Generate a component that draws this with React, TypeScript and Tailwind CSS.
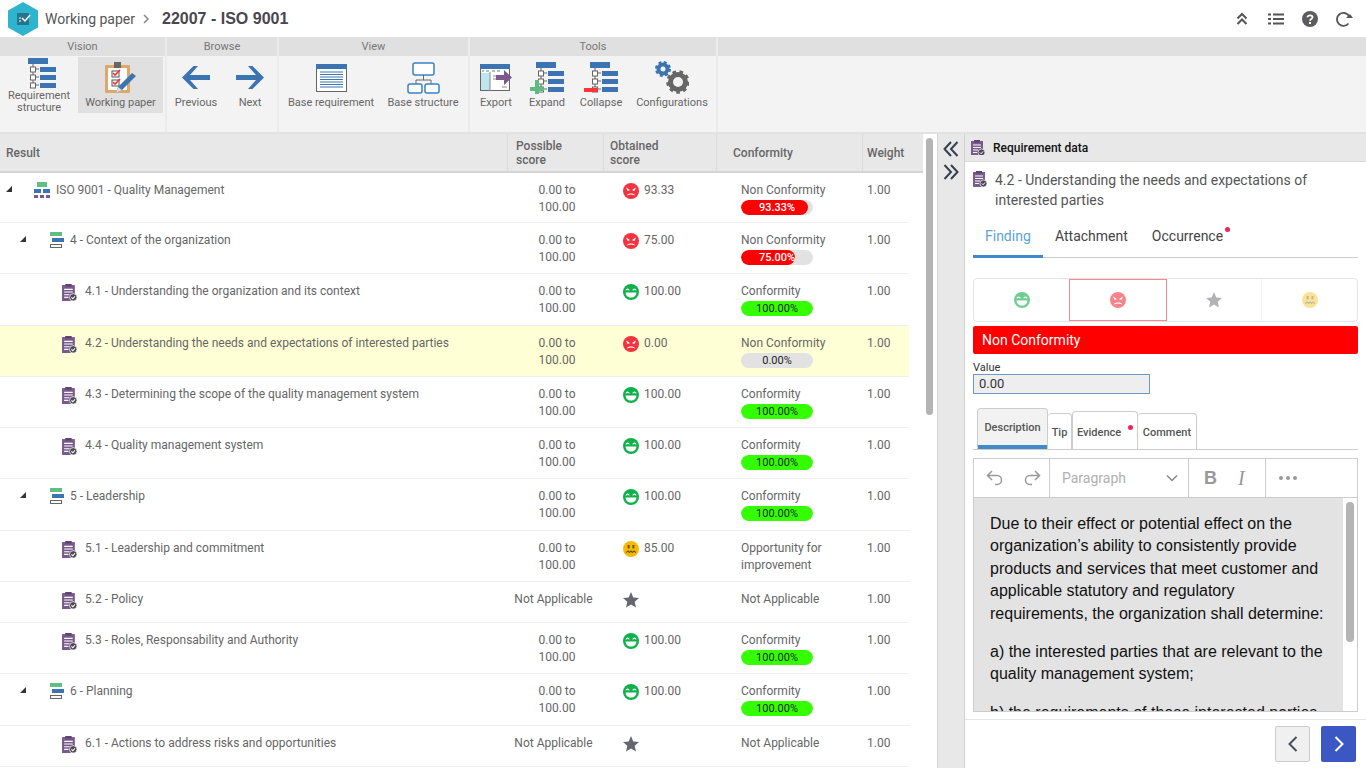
import { ReactNode } from "react";

type Mood = "bad" | "good" | "meh" | "star";

type Row = {
  level: 0 | 1 | 2;
  title?: string;
  h: number;
  na?: boolean;
  mood: Mood;
  score?: string;
  label?: string;
  pct?: number;
  selected?: boolean;
};

const rows: Row[] = [
  { level: 0, title: "ISO 9001 - Quality Management", h: 49, mood: "bad", score: "93.33", label: "Non Conformity", pct: 93.33 },
  { level: 1, title: "4 - Context of the organization", h: 50, mood: "bad", score: "75.00", label: "Non Conformity", pct: 75 },
  { level: 2, title: "4.1 - Understanding the organization and its context", h: 51, mood: "good", score: "100.00", label: "Conformity", pct: 100 },
  { level: 2, title: "4.2 - Understanding the needs and expectations of interested parties", h: 50, mood: "bad", score: "0.00", label: "Non Conformity", pct: 0, selected: true },
  { level: 2, title: "4.3 - Determining the scope of the quality management system", h: 50, mood: "good", score: "100.00", label: "Conformity", pct: 100 },
  { level: 2, title: "4.4 - Quality management system", h: 50, mood: "good", score: "100.00", label: "Conformity", pct: 100 },
  { level: 1, title: "5 - Leadership", h: 51, mood: "good", score: "100.00", label: "Conformity", pct: 100 },
  { level: 2, title: "5.1 - Leadership and commitment", h: 50, mood: "meh", score: "85.00", label: "Opportunity for improvement" },
  { level: 2, title: "5.2 - Policy", h: 40, na: true, mood: "star", label: "Not Applicable" },
  { level: 2, title: "5.3 - Roles, Responsability and Authority", h: 50, mood: "good", score: "100.00", label: "Conformity", pct: 100 },
  { level: 1, title: "6 - Planning", h: 51, mood: "good", score: "100.00", label: "Conformity", pct: 100 },
  { level: 2, title: "6.1 - Actions to address risks and opportunities", h: 40, na: true, mood: "star", label: "Not Applicable" },
  { level: 2, h: 50, mood: "good" },
];

function Face({ mood, size = 16 }: { mood: Mood; size?: number }) {
  if (mood === "star") {
    return (
      <svg width={size} height={size} viewBox="0 0 16 16">
        <polygon points="8,0 10.3,5.4 16,6 11.7,9.8 13,15.6 8,12.6 3,15.6 4.3,9.8 0,6 5.7,5.4" fill="#666670" />
      </svg>
    );
  }
  if (mood === "good") {
    return (
      <svg width={size} height={size} viewBox="0 0 16 16">
        <circle cx="8" cy="8" r="8" fill="#10b04a" />
        <path d="M3 6.4c.6-1.7 2.6-1.7 3.2 0M9.8 6.4c.6-1.7 2.6-1.7 3.2 0" fill="none" stroke="#fff" strokeWidth="1.3" />
        <path d="M2.6 8.4h10.8c0 3-2.4 5-5.4 5s-5.4-2-5.4-5z" fill="#fff" />
      </svg>
    );
  }
  if (mood === "meh") {
    return (
      <svg width={size} height={size} viewBox="0 0 16 16">
        <circle cx="8" cy="8" r="8" fill="#f7b900" />
        <rect x="4.6" y="4" width="2" height="3.4" fill="#6b5200" />
        <rect x="9.4" y="4" width="2" height="3.4" fill="#6b5200" />
        <path d="M3 11.6l2-1.6 1.5 1.4L8 10l1.5 1.4L11 10l2 1.6" fill="none" stroke="#6b5200" strokeWidth="1.1" />
      </svg>
    );
  }
  return (
    <svg width={size} height={size} viewBox="0 0 16 16">
      <circle cx="8" cy="8" r="8" fill="#f5333f" />
      <path d="M3 4.6l3.4 1.8v1.4H4.4zM13 4.6L9.6 6.4v1.4h2z" fill="#fff" />
      <path d="M3.8 12.4C5 9.8 11 9.8 12.2 12.4L10.6 12c-1.4-.8-3.8-.8-5.2 0z" fill="#fff" />
    </svg>
  );
}

function ReqIcon({ size = 15 }: { size?: number }) {
  return (
    <svg width={size} height={size * 1.14} viewBox="0 0 14 16">
      <rect x="0" y="1" width="12" height="15" fill="#7a5a8c" />
      <rect x="3" y="0" width="6" height="2.4" fill="#5f4470" />
      <path d="M2 5h8M2 7.5h8M2 10h5M2 12.500h4" stroke="#fff" strokeWidth="1" />
      <circle cx="10.500" cy="12.500" r="3.500" fill="#4a4a4f" stroke="#fff" strokeWidth=".7" />
      <path d="M8.800 12.500l1.300 1.300 2-2.300" fill="none" stroke="#fff" strokeWidth="1" />
    </svg>
  );
}

function LevelIcon({ level }: { level: 0 | 1 }) {
  if (level === 0) {
    return (
      <svg width="16" height="16" viewBox="0 0 16 16">
        <rect x="3" y="0" width="10" height="5" fill="#62bf82" />
        <rect x="0" y="7" width="7" height="4" fill="#3b74b0" />
        <rect x="9" y="7" width="7" height="4" fill="#3b74b0" />
        <rect x="0" y="13" width="4" height="3" fill="#7a5a8c" />
        <rect x="6" y="13" width="4" height="3" fill="#7a5a8c" />
        <rect x="12" y="13" width="4" height="3" fill="#7a5a8c" />
      </svg>
    );
  }
  return (
    <svg width="14" height="16" viewBox="0 0 14 16">
      <rect x="0" y="0" width="12" height="4" fill="#62bf82" />
      <rect x="2" y="6" width="12" height="4" fill="#3b74b0" />
      <rect x=".5" y="12.500" width="11" height="3" fill="none" stroke="#666" />
    </svg>
  );
}

function Expander() {
  return (
    <svg width="6" height="6" viewBox="0 0 6 6" className="shrink-0">
      <polygon points="6,0 6,6 0,6" fill="#333" />
    </svg>
  );
}

function ScoreBar({ pct }: { pct: number }) {
  const full = pct === 100;
  const color = pct === 100 ? "bg-[#33ff00]" : "bg-[#ff0000]";
  return (
    <div className="relative mt-[1px] h-[15px] w-[72px] overflow-hidden rounded-full bg-[#e2e2e2]">
      <div className={`h-full rounded-full ${color}`} style={{ width: `${pct}%` }} />
      <div className={`absolute inset-0 text-center text-[11px] leading-[15px] ${full || pct === 0 ? "text-[#222]" : "font-medium text-white"}`}>
        {pct.toFixed(2)}%
      </div>
    </div>
  );
}

function TableRow({ row }: { row: Row }) {
  const indent = row.level === 0 ? "pl-[6px]" : row.level === 1 ? "pl-[20px]" : "pl-[62px]";
  return (
    <div
      className={`flex border-b border-[#eeeeee] pt-[9px] text-xs leading-[17px] text-[#666] ${row.selected ? "bg-[#ffffd6]" : "bg-white"}`}
      style={{ height: row.h + 1 }}
    >
      <div className={`flex w-[507px] items-start ${indent}`}>
        {row.level < 2 && (
          <div className="mt-[4px]">
            <Expander />
          </div>
        )}
        {row.level === 0 && (
          <div className="ml-[22px] mr-[6px]">
            <LevelIcon level={0} />
          </div>
        )}
        {row.level === 1 && (
          <div className="ml-[24px] mr-[6px]">
            <LevelIcon level={1} />
          </div>
        )}
        {row.level === 2 && (
          <div className="mr-[8px] mt-[1px]">
            <ReqIcon />
          </div>
        )}
        {row.title && <span>{row.title}</span>}
      </div>
      <div className="w-[96px] text-center">
        {row.na ? (
          <div className="pr-[3px]">Not Applicable</div>
        ) : row.title ? (
          <div className="pl-[4px]">
            0.00 to
            <br />
            100.00
          </div>
        ) : null}
      </div>
      <div className="flex w-[113px] items-start gap-[5px] pl-[20px]">
        <div className="mt-[1px]">
          <Face mood={row.mood} />
        </div>
        {row.score && <span>{row.score}</span>}
      </div>
      <div className="w-[146px] pl-[25px]">
        {row.label && <div className="w-[100px]">{row.label}</div>}
        {row.pct !== undefined && <ScoreBar pct={row.pct} />}
      </div>
      <div className="w-[47px] pl-[5px]">{row.title ? "1.00" : ""}</div>
    </div>
  );
}

function StructureIcon({ mark }: { mark?: "plus" | "minus" }) {
  return (
    <svg width="34" height="32" viewBox="0 0 34 32">
      <rect x="6" y="0" width="20" height="6" fill="#3b74b0" />
      <path d="M11 6v22M11 11h6M11 19h6M11 27h6" stroke="#666" fill="none" />
      <rect x="8.500" y="9" width="5" height="5" fill="#fff" stroke="#666" />
      <rect x="8.500" y="17" width="5" height="5" fill="#fff" stroke="#666" />
      <rect x="8.500" y="25" width="5" height="5" fill="#fff" stroke="#666" />
      <rect x="18" y="9" width="16" height="5" fill="#3b74b0" />
      <rect x="18" y="17" width="16" height="5" fill="#3b74b0" />
      <rect x="18" y="25" width="16" height="5" fill="#3b74b0" />
      {mark === "plus" && <path d="M0 25h14v4H0zM5 18h4v14H5z" fill="#5cbb7f" />}
      {mark === "minus" && <rect x="0" y="26" width="14" height="4" fill="#f33" />}
    </svg>
  );
}

function WorkingPaperIcon() {
  return (
    <svg width="32" height="32" viewBox="0 0 32 32">
      <rect x="0" y="3" width="25" height="28" rx="1" fill="#e0a868" />
      <rect x="3" y="6" width="19" height="22" fill="#fff" />
      <rect x="9" y="0" width="7" height="6" fill="#666" />
      <rect x="7" y="9" width="7" height="6" fill="#fff" stroke="#555" />
      <rect x="7" y="18" width="7" height="6" fill="#fff" stroke="#555" />
      <path d="M8 11l2 2 5-5M8 20l2 2 5-5" fill="none" stroke="#e33" strokeWidth="1.600" />
      <path d="M11 31l2-6L27 11l4 3-14 14z" fill="#3b74b0" />
      <path d="M11 31l2-6 4 3z" fill="#ddd" />
    </svg>
  );
}

function ArrowIcon({ flip }: { flip?: boolean }) {
  return (
    <svg width="28" height="23" viewBox="0 0 28 23" className={flip ? "-scale-x-100" : ""}>
      <path d="M11.500 0L0 11.500 11.500 23h4.500L8 14h20V9H8l8-9z" fill="#3b74b0" />
    </svg>
  );
}

function BaseReqIcon() {
  return (
    <svg width="31" height="28" viewBox="0 0 31 28">
      <rect x=".5" y=".5" width="30" height="27" fill="#fff" stroke="#666" />
      <rect x="0" y="0" width="31" height="5" fill="#3b74b0" />
      <path d="M4 8h23M4 10.500h23M4 13h23M4 15.500h23M4 18h23M4 20.500h23M4 23h23" stroke="#3b74b0" />
    </svg>
  );
}

function BaseStructIcon() {
  return (
    <svg width="33" height="32" viewBox="0 0 33 32">
      <rect x="6" y="1" width="21" height="12" rx="2" fill="#fff" stroke="#3b82c4" strokeWidth="1.500" />
      <path d="M16.500 13v5M9 22v-4h15v4" fill="none" stroke="#666" />
      <rect x="1" y="22" width="14" height="9" rx="2" fill="#fff" stroke="#3b82c4" strokeWidth="1.500" />
      <rect x="18" y="22" width="14" height="9" rx="2" fill="#fff" stroke="#3b82c4" strokeWidth="1.500" />
    </svg>
  );
}

function ExportIcon() {
  return (
    <svg width="32" height="28" viewBox="0 0 32 28">
      <rect x=".5" y=".5" width="29" height="26" fill="#fff" stroke="#666" />
      <rect x="0" y="0" width="30" height="5" fill="#3b74b0" />
      <rect x="1" y="9" width="9" height="17" fill="#bfe6ee" />
      <path d="M2 7h2M6 7h3M12 7h3M17 7h3" stroke="#777" />
      <path d="M10 8v19M13 12h6M13 15h5M22 23h5" stroke="#888" />
      <path d="M16 11h8V6l8 7.500L24 21v-5h-8z" fill="#7d5a8e" />
    </svg>
  );
}

function GearIcon() {
  return (
    <svg width="34" height="33" viewBox="0 0 34 33">
      <circle cx="23" cy="21" r="7.500" fill="none" stroke="#666" strokeWidth="5" />
      <circle cx="23" cy="21" r="10" fill="none" stroke="#666" strokeWidth="3.500" strokeDasharray="3.500 3.400" />
      <circle cx="8" cy="8" r="4.500" fill="none" stroke="#3b74b0" strokeWidth="4" />
      <circle cx="8" cy="8" r="6.500" fill="none" stroke="#3b74b0" strokeWidth="3" strokeDasharray="2.800 2.300" />
    </svg>
  );
}

function RibbonButton({ label, width, active, children }: { label: string; width: string; active?: boolean; children: ReactNode }) {
  return (
    <div className={`flex h-[56px] shrink-0 flex-col items-center ${width} ${active ? "bg-[#e0e0e0]" : ""}`}>
      <div className="flex h-[40px] w-full items-center justify-center pt-[1px]">{children}</div>
      <div className="text-center text-[11px] leading-[12px] text-[#666]">{label}</div>
    </div>
  );
}

function RibbonGroup({ title, width, children }: { title: string; width: string; children?: ReactNode }) {
  return (
    <div className={`flex flex-col ${width}`}>
      <div className="h-[19px] bg-[#e0e0e0] text-center text-[11px] leading-[19px] text-[#777]">{title}</div>
      <div className="flex flex-1 pt-[1px]">{children}</div>
    </div>
  );
}

function Divider() {
  return <div className="w-[2px] shrink-0 bg-[#ebebeb]" />;
}

export default function App() {
  return (
    <div className="flex h-[768px] w-[1366px] flex-col overflow-hidden bg-white font-['Roboto',sans-serif]">
      {/* top bar */}
      <div className="flex h-[37px] shrink-0 items-center pl-[8px] pr-[13px]">
        <svg width="30" height="34" viewBox="0 0 30 34">
          <polygon points="15,0 30,8.500 30,25.500 15,34 0,25.500 0,8.500" fill="#2fb4d0" />
          <rect x="9" y="11" width="12" height="12" fill="#25758f" />
          <path d="M11 16h2M11 19h2" stroke="#fff" />
          <path d="M14 16l3 3 5-6" fill="none" stroke="#fff" strokeWidth="1.500" />
        </svg>
        <span className="ml-[7px] text-sm text-[#555]">Working paper</span>
        <svg width="7" height="10" viewBox="0 0 7 10" className="ml-[8px]">
          <path d="M1 1l4 4-4 4" fill="none" stroke="#888" strokeWidth="1.500" />
        </svg>
        <span className="ml-[12px] font-['Liberation_Sans',sans-serif] text-base font-bold text-[#4a4650]">22007 - ISO 9001</span>
        <div className="ml-auto flex items-center">
          <svg width="14" height="14" viewBox="0 0 14 14">
            <path d="M2.500 6.500L7 2l4.500 4.500M2.500 12L7 7.500l4.500 4.500" fill="none" stroke="#555" strokeWidth="2" />
          </svg>
          <svg width="16" height="12" viewBox="0 0 16 12" className="ml-[19px]">
            <path d="M0 1.500h3M5 1.500h11M0 6h3M5 6h11M0 10.500h3M5 10.500h11" stroke="#555" strokeWidth="2" />
          </svg>
          <svg width="16" height="16" viewBox="0 0 16 16" className="ml-[18px]">
            <circle cx="8" cy="8" r="8" fill="#5c5c60" />
            <path d="M5.500 6.200C5.700 3.700 10.500 3.700 10.500 6.200c0 1.800-2.500 1.700-2.500 3.600" fill="none" stroke="#fff" strokeWidth="1.800" />
            <rect x="7" y="11" width="2" height="2" fill="#fff" />
          </svg>
          <svg width="18" height="16" viewBox="0 0 18 16" className="ml-[17px]">
            <path d="M13.500 12.500A6.500 6.500 0 1 1 14 5" fill="none" stroke="#555" strokeWidth="1.800" />
            <polygon points="11,7 18,7 15,3" fill="#555" />
          </svg>
        </div>
      </div>

      {/* ribbon */}
      <div className="flex h-[97px] shrink-0 border-b-2 border-[#e2e2e2] bg-[#f3f3f3]">
        <RibbonGroup title="Vision" width="w-[165px]">
          <RibbonButton label="Requirement structure" width="w-[78px]">
            <StructureIcon />
          </RibbonButton>
          <RibbonButton label="Working paper" width="w-[85px]" active>
            <WorkingPaperIcon />
          </RibbonButton>
        </RibbonGroup>
        <Divider />
        <RibbonGroup title="Browse" width="w-[110px]">
          <RibbonButton label="Previous" width="w-[58px]">
            <ArrowIcon />
          </RibbonButton>
          <RibbonButton label="Next" width="w-[50px]">
            <ArrowIcon flip />
          </RibbonButton>
        </RibbonGroup>
        <Divider />
        <RibbonGroup title="View" width="w-[189px]">
          <RibbonButton label="Base requirement" width="w-[104px]">
            <BaseReqIcon />
          </RibbonButton>
          <RibbonButton label="Base structure" width="w-[80px]">
            <BaseStructIcon />
          </RibbonButton>
        </RibbonGroup>
        <Divider />
        <RibbonGroup title="Tools" width="w-[246px]">
          <RibbonButton label="Export" width="w-[52px]">
            <ExportIcon />
          </RibbonButton>
          <RibbonButton label="Expand" width="w-[50px]">
            <StructureIcon mark="plus" />
          </RibbonButton>
          <RibbonButton label="Collapse" width="w-[58px]">
            <StructureIcon mark="minus" />
          </RibbonButton>
          <RibbonButton label="Configurations" width="w-[84px]">
            <GearIcon />
          </RibbonButton>
        </RibbonGroup>
        <Divider />
        <RibbonGroup title="" width="flex-1" />
      </div>

      {/* main */}
      <div className="flex min-h-0 flex-1">
        <div className="w-[923px] shrink-0 overflow-hidden">
          <div className="flex h-[39px] border-b-2 border-[#d4d4d4] bg-[#e8e8e8] text-xs font-medium leading-[14px] text-[#666]">
            <div className="flex w-[507px] items-center pl-[6px]">Result</div>
            <div className="flex w-[96px] items-center border-l border-[#dcdcdc] pl-[8px]">
              Possible
              <br />
              score
            </div>
            <div className="flex w-[113px] items-center border-l border-[#dcdcdc] pl-[6px]">
              Obtained
              <br />
              score
            </div>
            <div className="flex w-[146px] items-center border-l border-[#dcdcdc] pl-[16px]">Conformity</div>
            <div className="flex flex-1 items-center border-l border-[#dcdcdc] pl-[4px]">Weight</div>
          </div>
          <div className="w-[909px]">
            {rows.map((row, i) => (
              <TableRow key={i} row={row} />
            ))}
          </div>
        </div>

        <div className="w-[14px] shrink-0 pl-[3px] pt-[4px]">
          <div className="h-[277px] w-[7px] rounded-full bg-[#b4b4b4]" />
        </div>

        <div className="flex w-[28px] shrink-0 flex-col items-center gap-[7px] border-x border-[#d2d2d2] bg-[#e8e8e8] pt-[7px]">
          <svg width="16" height="16" viewBox="0 0 16 16">
            <path d="M8 1L1.500 8 8 15M14.500 1L8 8l6.500 7" fill="none" stroke="#33414f" strokeWidth="2" />
          </svg>
          <svg width="16" height="16" viewBox="0 0 16 16">
            <path d="M1.500 1L8 8l-6.500 7M8 1l6.500 7L8 15" fill="none" stroke="#33414f" strokeWidth="2" />
          </svg>
        </div>

        {/* right panel */}
        <div className="flex min-w-0 flex-1 flex-col">
          <div className="flex h-[28px] shrink-0 items-center gap-[8px] border-b border-[#d8d8d8] bg-[#e8e8e8] pl-[6px] text-xs font-medium text-[#111]">
            <ReqIcon size={14} />
            Requirement data
          </div>
          <div className="min-h-0 flex-1 px-[8px]">
            <div className="flex gap-[8px] pt-[8px] text-sm leading-[20px] text-[#555]">
              <div className="mt-[1px]">
                <ReqIcon size={14} />
              </div>
              <div className="w-[340px]">4.2 - Understanding the needs and expectations of interested parties</div>
            </div>
            <div className="mt-[10px] flex h-[38px] border-b border-[#cccccc] text-sm leading-[20px] text-[#444]">
              <div className="h-[38px] w-[70px] border-b-[3px] border-[#428bca] pl-[12px] pt-[6px] text-[#5ba3d9]">Finding</div>
              <div className="ml-[12px] pt-[6px]">Attachment</div>
              <div className="relative ml-[24px] pt-[6px]">
                Occurrence
                <span className="absolute -right-[7px] top-[7px] h-[5px] w-[5px] rounded-full bg-[#f5205a]" />
              </div>
            </div>
            <div className="mt-[20px] flex h-[44px] rounded-[4px] border border-[#e4e4e4]">
              <div className="flex w-[95px] items-center justify-center opacity-60">
                <Face mood="good" />
              </div>
              <div className="flex w-[98px] items-center justify-center border border-[#f48a8f] opacity-100">
                <div className="opacity-60">
                  <Face mood="bad" />
                </div>
              </div>
              <div className="flex w-[95px] items-center justify-center border-r border-[#e4e4e4] opacity-50">
                <Face mood="star" />
              </div>
              <div className="flex flex-1 items-center justify-center opacity-40">
                <Face mood="meh" />
              </div>
            </div>
            <div className="mt-[4px] h-[28px] rounded-[2px] bg-[#ff0000] pl-[9px] text-sm leading-[28px] text-white">Non Conformity</div>
            <div className="mt-[7px] text-[11px] leading-[13px] text-[#333]">Value</div>
            <div className="h-[20px] w-[177px] border border-[#6b9ac4] bg-[#eeeeee] pl-[5px] text-[13px] leading-[18px] text-[#333]">0.00</div>

            <div className="mt-[15px] flex h-[41px] items-end border-b border-[#cccccc] pl-[4px] text-[11px] font-medium text-[#555]">
              <div className="h-[41px] w-[71px] rounded-t-[4px] border border-b-0 border-[#cccccc] bg-[#f2f2f2]">
                <div className="h-[36px] pt-[12px] text-center leading-[13px]">Description</div>
                <div className="h-[4px] bg-[#428bca]" />
              </div>
              <div className="h-[36px] w-[24px] rounded-t-[4px] border border-b-0 border-l-0 border-[#cccccc] pt-[12px] text-center leading-[13px]">Tip</div>
              <div className="relative h-[38px] w-[66px] rounded-t-[4px] border border-b-0 border-[#cccccc] pl-[4px] pt-[14px] leading-[13px]">
                Evidence
                <span className="absolute right-[4px] top-[13px] h-[5px] w-[5px] rounded-full bg-[#f5205a]" />
              </div>
              <div className="h-[36px] w-[59px] rounded-t-[4px] border border-b-0 border-l-0 border-[#cccccc] pt-[12px] text-center leading-[13px]">Comment</div>
            </div>

            {/* editor */}
            <div className="mt-[8px] h-[254px] overflow-hidden border border-[#cccccc]">
              <div className="flex h-[39px] border-b border-[#cccccc] text-[#999]">
                <div className="flex w-[76px] items-center gap-[19px] border-r border-[#cccccc] pl-[12px]">
                  <svg width="18" height="18" viewBox="0 0 18 18">
                    <path d="M6 2L1.500 6.500 6 11M2 6.500h9c6 0 6 9 0 9H9" fill="none" stroke="#999" strokeWidth="1.500" />
                  </svg>
                  <svg width="18" height="18" viewBox="0 0 18 18">
                    <path d="M12 2l4.500 4.500L12 11M16 6.500H7c-6 0-6 9 0 9h2" fill="none" stroke="#999" strokeWidth="1.500" />
                  </svg>
                </div>
                <div className="flex w-[139px] items-center justify-between border-r border-[#cccccc] pl-[12px] pr-[10px] text-sm text-[#b0b0b0]">
                  Paragraph
                  <svg width="12" height="8" viewBox="0 0 12 8">
                    <path d="M1 1.500l5 5 5-5" fill="none" stroke="#888" strokeWidth="1.500" />
                  </svg>
                </div>
                <div className="flex w-[77px] items-center gap-[21px] border-r border-[#cccccc] pl-[15px]">
                  <span className="font-['Liberation_Sans',sans-serif] text-[18px] font-bold">B</span>
                  <span className="font-['Liberation_Serif',serif] text-[20px] italic">I</span>
                </div>
                <div className="flex items-center gap-[3px] pl-[13px]">
                  <span className="h-[4px] w-[4px] rounded-full bg-[#999]" />
                  <span className="h-[4px] w-[4px] rounded-full bg-[#999]" />
                  <span className="h-[4px] w-[4px] rounded-full bg-[#999]" />
                </div>
              </div>
              <div className="flex h-[214px]">
                <div className="w-[369px] shrink-0 bg-[#e3e3e3] pl-[16px] pr-[10px] pt-[15px] font-['Liberation_Sans',sans-serif] text-base leading-[22.4px] text-[#111]">
                  <p>Due to their effect or potential effect on the organization’s ability to consistently provide products and services that meet customer and applicable statutory and regulatory requirements, the organization shall determine:</p>
                  <p className="mt-[16px]">a) the interested parties that are relevant to the quality management system;</p>
                  <p className="mt-[16px]">b) the requirements of these interested parties that are relevant to the quality management system.</p>
                </div>
                <div className="flex-1 pl-[3px] pt-[4px]">
                  <div className="h-[140px] w-[8px] rounded-full bg-[#b4b4b4]" />
                </div>
              </div>
            </div>
          </div>
          <div className="flex h-[49px] shrink-0 items-start justify-end gap-[11px] border-t border-[#e4e4e4] pr-[10px] pt-[6px]">
            <div className="flex h-[36px] w-[35px] items-center justify-center rounded-[2px] border border-[#cccccc] bg-[#f0f0f0]">
              <svg width="10" height="16" viewBox="0 0 10 16">
                <path d="M8.500 1L1.500 8l7 7" fill="none" stroke="#44505c" strokeWidth="2" />
              </svg>
            </div>
            <div className="flex h-[36px] w-[35px] items-center justify-center rounded-[2px] bg-[#3a57c4]">
              <svg width="10" height="16" viewBox="0 0 10 16">
                <path d="M1.500 1l7 7-7 7" fill="none" stroke="#fff" strokeWidth="2" />
              </svg>
            </div>
          </div>
        </div>
      </div>
    </div>
  );
}
